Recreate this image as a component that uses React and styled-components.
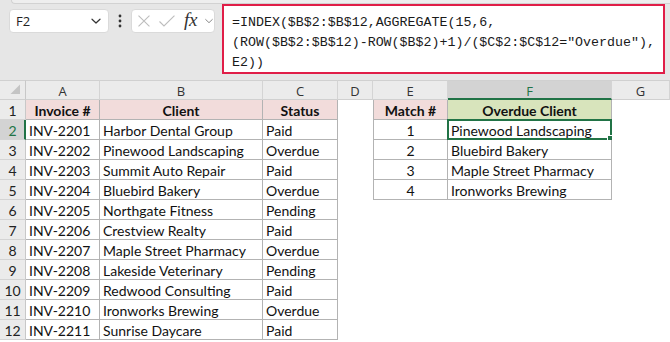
import React from 'react';
import styled, { createGlobalStyle } from 'styled-components';

const Global = createGlobalStyle`
  html, body { margin: 0; padding: 0; background: #ffffff; }
  body { width: 670px; height: 342px; overflow: hidden; }
`;

const CELL_FONT = `Lato, "Liberation Sans", sans-serif`;
const UI_FONT = `"Open Sans", "Noto Sans", sans-serif`;
const GREEN = '#217346';
const LINE = '#b3b3b3';

const Page = styled.div`
  width: 670px;
  height: 342px;
  display: flex;
  flex-direction: column;
  background: #ffffff;
  overflow: hidden;
`;

const Toolbar = styled.div`
  position: relative;
  height: 80px;
  flex: none;
  box-sizing: border-box;
  background: #e6e6e6;
  display: flex;
  align-items: flex-start;
  padding: 4px 0 0 9px;
`;

const RibbonEdge = styled.div`
  position: absolute;
  left: 11px;
  right: 0;
  top: 0;
  height: 3px;
  background: #eeeeee;
  border-bottom: 1px solid #d2d2d2;
  border-left: 1px solid #d2d2d2;
  border-bottom-left-radius: 4px;
`;

const NameBox = styled.div`
  margin-top: 5px;
  width: 100px;
  height: 24px;
  box-sizing: border-box;
  background: #fff;
  border: 1px solid #dadada;
  border-radius: 4px;
  display: flex;
  align-items: center;
  justify-content: space-between;
  padding: 0 6px 0 6px;
  font-family: ${UI_FONT};
  font-size: 13px;
  color: #222;
`;

const Dots = styled.div`
  margin-top: 5px;
  width: 22px;
  height: 24px;
  display: flex;
  align-items: center;
  justify-content: center;
`;

const FxBox = styled.div`
  margin-top: 5px;
  width: 84px;
  height: 24px;
  box-sizing: border-box;
  background: #fff;
  border: 1px solid #dadada;
  border-radius: 4px;
  display: flex;
  align-items: center;
  padding: 0 0 0 5px;
  gap: 7px;
`;

const Fx = styled.span`
  font-family: "Liberation Serif", "DejaVu Serif", serif;
  font-style: italic;
  font-size: 19px;
  line-height: 20px;
  color: #333;
  margin-left: 1px;
  margin-top: -2px;
  letter-spacing: -0.3px;
`;

const FormulaBox = styled.div`
  margin-left: 7px;
  width: 443px;
  height: 70px;
  box-sizing: border-box;
  background: #fff;
  border: 2px solid #e01e48;
  padding: 7px 0 0 8px;
  font-family: "Liberation Mono", "DejaVu Sans Mono", monospace;
  font-size: 13.3px;
  line-height: 20px;
  color: #1a1a1a;
  white-space: pre;
`;

const Sheet = styled.div`
  display: grid;
  grid-template-columns: 26px 74px 163px 75px 35px 75px 164px 58px;
  grid-auto-rows: 20px;
`;

const ColHead = styled.div`
  box-sizing: border-box;
  background: ${(p) => (p.$sel ? '#d3d3d3' : '#ebebeb')};
  border-top: 1px solid #d0d0d0;
  border-right: 1px solid #d4d4d4;
  border-bottom: ${(p) => (p.$sel ? `2px solid ${GREEN}` : '1px solid #d0d0d0')};
  display: flex;
  align-items: center;
  justify-content: center;
  font-family: ${UI_FONT};
  font-size: 13px;
  color: ${(p) => (p.$sel ? GREEN : '#333')};
  padding-top: ${(p) => (p.$sel ? '3px' : '2px')};
`;

const Corner = styled(ColHead)`
  position: relative;
  border-right: 1px solid #c8c8c8;
`;

const RowHead = styled.div`
  box-sizing: border-box;
  background: ${(p) => (p.$sel ? '#d3d3d3' : '#ebebeb')};
  border-right: ${(p) => (p.$sel ? `2px solid ${GREEN}` : '1px solid #c8c8c8')};
  border-bottom: 1px solid #d4d4d4;
  display: flex;
  align-items: center;
  justify-content: center;
  font-family: ${CELL_FONT};
  font-size: 14px;
  color: ${(p) => (p.$sel ? GREEN : '#222')};
  padding: 2px 0 0 ${(p) => (p.$sel ? '1px' : '0')};
`;

const Cell = styled.div`
  position: relative;
  box-sizing: border-box;
  background: ${(p) => p.$fill || '#fff'};
  border-right: ${(p) => (p.$b ? `1px solid ${LINE}` : 'none')};
  border-bottom: ${(p) => (p.$b ? `1px solid ${LINE}` : 'none')};
  border-left: ${(p) => (p.$l ? `1px solid ${LINE}` : 'none')};
  padding: 2px 3px 0;
  display: flex;
  align-items: center;
  justify-content: ${(p) => (p.$center ? 'center' : 'flex-start')};
  font-family: ${CELL_FONT};
  font-size: 14px;
  font-weight: ${(p) => (p.$bold ? 700 : 400)};
  color: #111;
  white-space: nowrap;
  overflow: visible;
`;

const Selection = styled.div`
  position: absolute;
  left: -1px;
  top: -1px;
  right: -1px;
  bottom: -1px;
  border: 2px solid ${GREEN};
  pointer-events: none;
`;

const FillHandle = styled.div`
  position: absolute;
  right: -4px;
  bottom: -4px;
  width: 7px;
  height: 7px;
  box-sizing: border-box;
  background: ${GREEN};
  border: 1px solid #fff;
`;

const Chevron = ({ color = '#333', size = 12 }) => (
  <svg width={size} height={size} viewBox="0 0 12 12">
    <path d="M2 4.2 L6 8 L10 4.2" fill="none" stroke={color} strokeWidth="1.2" strokeLinecap="round" strokeLinejoin="round" />
  </svg>
);

const rows = [
  ['INV-2201', 'Harbor Dental Group', 'Paid'],
  ['INV-2202', 'Pinewood Landscaping', 'Overdue'],
  ['INV-2203', 'Summit Auto Repair', 'Paid'],
  ['INV-2204', 'Bluebird Bakery', 'Overdue'],
  ['INV-2205', 'Northgate Fitness', 'Pending'],
  ['INV-2206', 'Crestview Realty', 'Paid'],
  ['INV-2207', 'Maple Street Pharmacy', 'Overdue'],
  ['INV-2208', 'Lakeside Veterinary', 'Pending'],
  ['INV-2209', 'Redwood Consulting', 'Paid'],
  ['INV-2210', 'Ironworks Brewing', 'Overdue'],
  ['INV-2211', 'Sunrise Daycare', 'Paid'],
];

const matches = ['Pinewood Landscaping', 'Bluebird Bakery', 'Maple Street Pharmacy', 'Ironworks Brewing'];

const PINK = '#f2dcdb';
const LIME = '#d8e4bc';

export default function App() {
  const cols = ['A', 'B', 'C', 'D', 'E', 'F', 'G'];
  return (
    <Page>
      <Global />
      <Toolbar>
        <RibbonEdge />
        <NameBox>
          <span>F2</span>
          <Chevron />
        </NameBox>
        <Dots>
          <svg width="4" height="14" viewBox="0 0 4 14">
            <circle cx="2" cy="2" r="1.4" fill="#333" />
            <circle cx="2" cy="7" r="1.4" fill="#333" />
            <circle cx="2" cy="12" r="1.4" fill="#333" />
          </svg>
        </Dots>
        <FxBox>
          <svg width="14" height="14" viewBox="0 0 14 14">
            <path d="M1.5 1.5 L12.5 12.5 M12.5 1.5 L1.5 12.5" stroke="#bdbdbd" strokeWidth="1.1" fill="none" />
          </svg>
          <svg width="18" height="14" viewBox="0 0 18 14">
            <path d="M1.5 7.5 L6 12 L16.5 1.5" stroke="#bdbdbd" strokeWidth="1.1" fill="none" />
          </svg>
          <Fx>fx</Fx>
          <Chevron color="#888" size={10} />
        </FxBox>
        <FormulaBox>{'=INDEX($B$2:$B$12,AGGREGATE(15,6,\n(ROW($B$2:$B$12)-ROW($B$2)+1)/($C$2:$C$12="Overdue"),\nE2))'}</FormulaBox>
      </Toolbar>
      <Sheet>
        <Corner>
          <svg width="11" height="11" viewBox="0 0 11 11" style={{ position: 'absolute', right: 4, bottom: 4 }}>
            <path d="M10 0.5 L10 10 L0.5 10 Z" fill="#c4c4c4" />
          </svg>
        </Corner>
        {cols.map((c) => (
          <ColHead key={c} $sel={c === 'F'}>{c}</ColHead>
        ))}

        <RowHead>1</RowHead>
        <Cell $b $fill={PINK} $bold $center>Invoice #</Cell>
        <Cell $b $fill={PINK} $bold $center>Client</Cell>
        <Cell $b $fill={PINK} $bold $center>Status</Cell>
        <Cell />
        <Cell $b $l $fill={PINK} $bold $center>Match #</Cell>
        <Cell $b $fill={LIME} $bold $center>Overdue Client</Cell>
        <Cell />

        {rows.map((r, i) => {
          const n = i + 2;
          const m = i < 4 ? matches[i] : null;
          return (
            <React.Fragment key={n}>
              <RowHead $sel={n === 2}>{n}</RowHead>
              <Cell $b>{r[0]}</Cell>
              <Cell $b>{r[1]}</Cell>
              <Cell $b>{r[2]}</Cell>
              <Cell />
              {m ? <Cell $b $l $center>{i + 1}</Cell> : <Cell />}
              {m ? (
                <Cell $b>
                  {m}
                  {n === 2 && (
                    <Selection>
                      <FillHandle />
                    </Selection>
                  )}
                </Cell>
              ) : (
                <Cell />
              )}
              <Cell />
            </React.Fragment>
          );
        })}
      </Sheet>
    </Page>
  );
}
